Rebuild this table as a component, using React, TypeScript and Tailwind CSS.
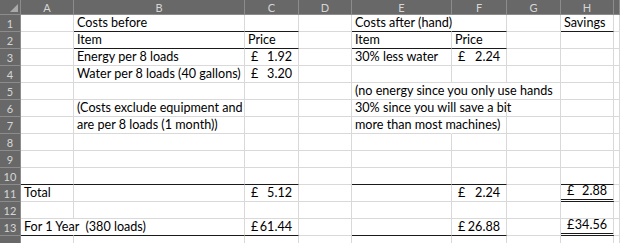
import React from 'react';

const cols = ['A', 'B', 'C', 'D', 'E', 'F', 'G', 'H', ''];

type CellSpec = {
  text?: string;
  money?: string;
  bottom?: 'line' | 'double';
  open?: boolean; // text runs into the next cell, so no gridline on the right
};

// row number -> column letter -> cell
const sheet: Record<number, Record<string, CellSpec>> = {
  1: {
    B: { text: 'Costs before', bottom: 'line' },
    C: { bottom: 'line' },
    E: { text: 'Costs after (hand)', bottom: 'line', open: true },
    F: { bottom: 'line' },
    H: { text: 'Savings', bottom: 'line' },
  },
  2: {
    B: { text: 'Item', bottom: 'line' },
    C: { text: 'Price', bottom: 'line' },
    E: { text: 'Item', bottom: 'line' },
    F: { text: 'Price', bottom: 'line' },
  },
  3: {
    B: { text: 'Energy per 8 loads' },
    C: { money: '1.92' },
    E: { text: '30% less water' },
    F: { money: '2.24' },
  },
  4: {
    B: { text: 'Water per 8 loads (40 gallons)' },
    C: { money: '3.20' },
  },
  5: {
    E: { text: '(no energy since you only use hands', open: true },
    F: { open: true },
  },
  6: {
    B: { text: '(Costs exclude equipment and' },
    E: { text: '30% since you will save a bit', open: true },
  },
  7: {
    B: { text: 'are per 8 loads (1 month))' },
    E: { text: 'more than most machines)', open: true },
  },
  10: {
    A: { bottom: 'line' },
    B: { bottom: 'line' },
    C: { bottom: 'line' },
    E: { bottom: 'line' },
    F: { bottom: 'line' },
    H: { bottom: 'line' },
  },
  11: {
    A: { text: 'Total' },
    C: { money: '5.12' },
    F: { money: '2.24' },
    H: { money: '2.88', bottom: 'double' },
  },
  13: {
    A: { text: 'For 1 Year  (380 loads)', bottom: 'line', open: true },
    B: { bottom: 'line' },
    C: { money: '61.44', bottom: 'line' },
    E: { bottom: 'line' },
    F: { money: '26.88', bottom: 'line' },
    H: { money: '34.56', bottom: 'double' },
  },
};

function Cell({ spec }: { spec?: CellSpec }) {
  const bottom =
    spec?.bottom === 'double'
      ? 'border-b-[3px] border-double border-b-[#1a1a1a]'
      : spec?.bottom === 'line'
        ? 'border-b border-b-[#1a1a1a]'
        : 'border-b border-b-[#d9d9d9]';
  const right = spec?.open ? 'border-r border-r-transparent' : 'border-r border-r-[#d9d9d9]';

  return (
    <div className={`flex items-end min-w-0 ${bottom} ${right}`}>
      {spec?.money ? (
        <div className="flex w-full justify-between pl-[6px] pr-[6px] pb-[1px] leading-[15px]">
          <span>£</span>
          <span>{spec.money}</span>
        </div>
      ) : spec?.text ? (
        <span className="pl-[3px] pb-[1px] leading-[15px] whitespace-pre overflow-visible">{spec.text}</span>
      ) : null}
    </div>
  );
}

export default function App() {
  const rows = Array.from({ length: 14 }, (_, i) => i + 1);

  return (
    <div
      className="w-[620px] h-[243px] overflow-hidden bg-white text-[12.6px] text-black"
      style={{ fontFamily: 'Lato, "Open Sans", sans-serif' }}
    >
      <div className="grid grid-cols-[21px_53px_171px_54px_53px_100px_55px_54px_53px_1fr] grid-rows-[15px_repeat(14,17px)]">
        {/* corner */}
        <div className="relative bg-[#686868] border-r border-b border-[#8c8c8c]">
          <div className="absolute right-[2px] bottom-[2px] w-0 h-0 border-l-[8px] border-l-transparent border-b-[8px] border-b-[#a9a9a9]" />
        </div>
        {cols.map((c, i) => (
          <div
            key={`h-${i}`}
            className="flex items-center justify-center bg-[#686868] border-r border-b border-[#8c8c8c] text-[11px] text-[#d6d6d6] leading-none"
          >
            {c}
          </div>
        ))}

        {rows.map((r) => (
          <React.Fragment key={`r-${r}`}>
            {/* the last row is cut off by the window, its number is not visible */}
            <div className="flex items-center justify-center bg-[#686868] border-r border-b border-[#8c8c8c] text-[11px] text-[#d6d6d6] leading-none">
              {r < 14 ? r : ''}
            </div>
            {cols.map((c, i) => (
              <Cell key={`c-${r}-${i}`} spec={c ? sheet[r]?.[c] : undefined} />
            ))}
          </React.Fragment>
        ))}
      </div>
    </div>
  );
}
